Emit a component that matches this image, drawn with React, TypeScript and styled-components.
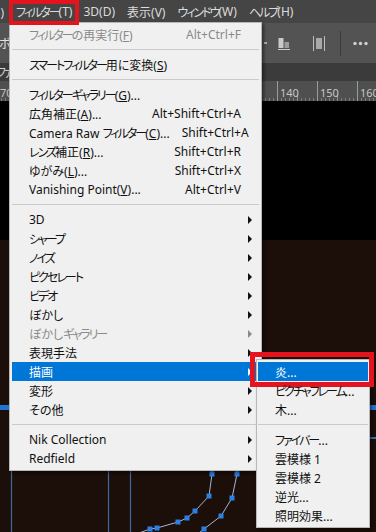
import React from "react";
import styled, { createGlobalStyle, css } from "styled-components";

const GlobalStyle = createGlobalStyle`
  html, body {
    margin: 0;
    padding: 0;
    background: #000;
  }
`;

const UI_FONT = `"Noto Sans", "Noto Sans CJK JP", sans-serif`;
const MARK_RED = "#e5131d";

const Screen = styled.div`
  position: relative;
  width: 376px;
  height: 532px;
  overflow: hidden;
  display: flex;
  flex-direction: column;
  font-family: ${UI_FONT};
  font-feature-settings: "palt";
`;

/* katakana in the Windows UI font are much narrower than in Noto CJK */
const Kana = styled.span`
  letter-spacing: -2px;
`;

/* ---------- application menu bar ---------- */

const MenuBar = styled.div`
  flex: none;
  height: 23px;
  display: flex;
  align-items: center;
  background: #454545;
  color: #dcdcdc;
  font-size: 12px;
`;

const BarLead = styled.div`
  flex: none;
  width: 10px;
  height: 100%;
  display: flex;
  justify-content: flex-end;
`;

const BarItem = styled.div<{ $marked?: boolean }>`
  position: relative;
  flex: none;
  height: 23px;
  display: flex;
  align-items: center;
  padding: 0 6px;
  white-space: nowrap;

  ${(p) =>
    p.$marked &&
    css`
      z-index: 20;
      padding-right: 5px;
      &::after {
        content: "";
        position: absolute;
        left: -1px;
        right: -2px;
        top: 0;
        bottom: -2px;
        border: 4px solid ${MARK_RED};
      }
    `}
`;

/* ---------- options bar ---------- */

const OptionsBar = styled.div`
  flex: none;
  height: 40px;
  display: flex;
  align-items: center;
  background: #535353;
  color: #e2e2e2;
  font-size: 12px;
`;

const OptionLabel = styled.span`
  margin-left: -1px;
  white-space: nowrap;
`;

const ToolGroup = styled.div`
  margin-left: auto;
  padding-right: 8px;
  display: flex;
  align-items: center;
`;

const ToolDash = styled.span`
  width: 3px;
  height: 2px;
  background: #b4b4b4;
`;

const ToolSlot = styled.span<{ $space: number }>`
  margin-left: ${(p) => p.$space}px;
  display: flex;
  align-items: center;
`;

const ToolDivider = styled.span`
  margin-left: 15px;
  width: 1px;
  height: 25px;
  background: #3c3c3c;
`;

/* ---------- document tab + ruler ---------- */

const TabBar = styled.div`
  flex: none;
  height: 18px;
  display: flex;
  align-items: center;
  background: #3b3b3b;
  color: #cfcfcf;
  font-size: 12px;
`;

const TabLabel = styled.span`
  margin-left: -4px;
  white-space: nowrap;
`;

const Ruler = styled.div`
  flex: none;
  height: 20px;
  display: flex;
  background: #4f4f4f;
  color: #c6c6c6;
  font-size: 11px;
`;

const RulerCell = styled.div`
  flex: none;
  width: 40px;
  height: 100%;
  box-sizing: border-box;
  border-left: 1px solid #9a9a9a;
  padding: 6px 0 0 2px;
  line-height: 1;
  background:
    linear-gradient(#8e8e8e, #8e8e8e) 19px 100% / 1px 7px no-repeat,
    repeating-linear-gradient(90deg, transparent 0 3px, #7e7e7e 3px 4px) 0 100% / 100% 3px no-repeat;

  &:first-child {
    margin-left: -3px;
  }
`;

/* ---------- canvas ---------- */

const CanvasBlack = styled.div`
  flex: none;
  height: 139px;
  background: #000;
`;

const CanvasArt = styled.div`
  flex: 1;
  background: #1c0e08;

  svg {
    display: block;
    width: 100%;
    height: 100%;
  }
`;

/* ---------- dropdown menus ---------- */

const panel = css`
  position: absolute;
  box-sizing: border-box;
  background: #f0f0f0;
  border: 1px solid #b8b8b8;
  box-shadow: 2px 2px 3px rgba(0, 0, 0, 0.45);
  font-size: 12px;
`;

const Dropdown = styled.div`
  ${panel};
  top: 22px;
  left: 9px;
  width: 253px;
  padding: 2px;
  z-index: 10;
`;

const Flyout = styled.div`
  ${panel};
  top: -3px;
  left: 244px;
  width: 114px;
  padding: 2px 1px;
  z-index: 12;
`;

const Row = styled.div<{ $active?: boolean; $disabled?: boolean; $marked?: boolean }>`
  position: relative;
  height: 19px;
  display: flex;
  align-items: center;
  padding: 0 18px 0 17px;
  white-space: nowrap;
  color: ${(p) => (p.$active ? "#ffffff" : p.$disabled ? "#8a8a8a" : "#111111")};
  background: ${(p) => (p.$active ? "#0076d6" : "transparent")};

  u {
    text-underline-offset: 1px;
  }

  ${(p) =>
    p.$marked &&
    css`
      &::after {
        content: "";
        position: absolute;
        left: -8px;
        right: -6px;
        top: -10px;
        bottom: -6px;
        border: 5px solid ${MARK_RED};
      }
    `}
`;

const Shortcut = styled.span`
  margin-left: auto;
  padding-left: 12px;
`;

const SubArrow = styled.span<{ $color: string }>`
  margin-left: auto;
  margin-right: -11px;
  width: 0;
  height: 0;
  border-left: 4px solid ${(p) => p.$color};
  border-top: 4px solid transparent;
  border-bottom: 4px solid transparent;
`;

const Separator = styled.div`
  height: 1px;
  margin: 5px 0;
  background: #cacaca;
`;

/* ---------- data ---------- */

type Entry =
  | { sep: true }
  | { label: string; keys?: string; sub?: boolean; off?: boolean; open?: boolean };

const FILTER_MENU: Entry[] = [
  { label: "フィルターの再実行(&F)", keys: "Alt+Ctrl+F", off: true },
  { sep: true },
  { label: "スマートフィルター用に変換(&S)" },
  { sep: true },
  { label: "フィルターギャラリー(&G)..." },
  { label: "広角補正(&A)...", keys: "Alt+Shift+Ctrl+A" },
  { label: "Camera Raw フィルター(&C)...", keys: "Shift+Ctrl+A" },
  { label: "レンズ補正(&R)...", keys: "Shift+Ctrl+R" },
  { label: "ゆがみ(&L)...", keys: "Shift+Ctrl+X" },
  { label: "Vanishing Point(&V)...", keys: "Alt+Ctrl+V" },
  { sep: true },
  { label: "3D", sub: true },
  { label: "シャープ", sub: true },
  { label: "ノイズ", sub: true },
  { label: "ピクセレート", sub: true },
  { label: "ビデオ", sub: true },
  { label: "ぼかし", sub: true },
  { label: "ぼかしギャラリー", sub: true, off: true },
  { label: "表現手法", sub: true },
  { label: "描画", sub: true, open: true },
  { label: "変形", sub: true },
  { label: "その他", sub: true },
  { sep: true },
  { label: "Nik Collection", sub: true },
  { label: "Redfield", sub: true },
];

const RENDER_MENU: Entry[] = [
  { label: "炎...", open: true },
  { label: "ピクチャフレーム..." },
  { label: "木..." },
  { sep: true },
  { label: "ファイバー..." },
  { label: "雲模様 1" },
  { label: "雲模様 2" },
  { label: "逆光..." },
  { label: "照明効果..." },
];

const BAR_ITEMS = ["3D(D)", "表示(V)", "ウィンドウ(W)", "ヘルプ(H)"];

/* labels under the dropdown are covered, so only the visible ones are printed */
const RULER_MARKS = [
  { at: 70, show: true },
  { at: 80 }, { at: 90 }, { at: 100 }, { at: 110 }, { at: 120 }, { at: 130 },
  { at: 140, show: true },
  { at: 150, show: true },
  { at: 160, show: true },
];

const KATAKANA_RUN = /([\u30a1-\u30ff]+)/;

const Jp = ({ text }: { text: string }) => (
  <>
    {text.split(KATAKANA_RUN).map((part, i) =>
      i % 2 === 1 ? <Kana key={i}>{part}</Kana> : part
    )}
  </>
);

const Label = ({ text }: { text: string }) => {
  const i = text.indexOf("&");
  if (i < 0) return <Jp text={text} />;
  return (
    <>
      <Jp text={text.slice(0, i)} />
      <u>{text[i + 1]}</u>
      {text.slice(i + 2)}
    </>
  );
};

/* ---------- icons ---------- */

const AlignBottomIcon = () => (
  <svg width="12" height="14" viewBox="0 0 12 14">
    <rect x="0.5" y="2" width="5" height="10" fill="#c9c9c9" />
    <rect x="6.5" y="6" width="4.5" height="6" fill="#9c9c9c" />
    <rect x="0" y="13" width="12" height="1" fill="#c9c9c9" />
  </svg>
);

const DistributeIcon = () => (
  <svg width="12" height="15" viewBox="0 0 12 15">
    <rect x="0" y="0" width="1" height="15" fill="#bdbdbd" />
    <rect x="3" y="2" width="6" height="11" fill="#a9a9a9" />
    <rect x="11" y="0" width="1" height="15" fill="#bdbdbd" />
  </svg>
);

const MoreIcon = () => (
  <svg width="15" height="5" viewBox="0 0 15 5">
    <circle cx="2" cy="2.5" r="1.7" fill="#cfcfcf" />
    <circle cx="7.5" cy="2.5" r="1.7" fill="#cfcfcf" />
    <circle cx="13" cy="2.5" r="1.7" fill="#cfcfcf" />
  </svg>
);

const PATH_A: [number, number][] = [
  [150, 529], [157, 528], [178, 522], [187, 518], [195, 511], [209, 496], [212, 474],
];
const PATH_B: [number, number][] = [
  [204, 529], [221, 516], [232, 498], [237, 474],
];

const ArtLayer = () => (
  <svg viewBox="0 240 376 292" preserveAspectRatio="none">
    <g stroke="#41679f" strokeWidth="1.2">
      <line x1="11.5" y1="240" x2="11.5" y2="532" />
      <line x1="108.5" y1="240" x2="108.5" y2="532" />
      <line x1="130.5" y1="240" x2="130.5" y2="532" />
    </g>
    <rect x="0" y="405" width="376" height="5" fill="#1f74d6" />
    <rect x="368" y="437" width="8" height="2" fill="#3a6fb8" />
    <polyline
      points={[[120, 540], ...PATH_A, [214, 440]].map((p) => p.join(",")).join(" ")}
      fill="none"
      stroke="#a7b7d2"
      strokeWidth="1"
    />
    <polyline
      points={[[190, 540], ...PATH_B, [240, 440]].map((p) => p.join(",")).join(" ")}
      fill="none"
      stroke="#a7b7d2"
      strokeWidth="1"
    />
    {[...PATH_A, ...PATH_B].map(([x, y], i) => (
      <rect key={i} x={x - 2.5} y={y - 2.5} width="5" height="5" fill="#2a80e6" />
    ))}
  </svg>
);

/* ---------- menu rendering ---------- */

const MenuRows = ({ items, flyout }: { items: Entry[]; flyout?: Entry[] }) => (
  <>
    {items.map((e, i) => {
      if ("sep" in e) return <Separator key={i} />;
      const arrowColor = e.open ? "#ffffff" : e.off ? "#8a8a8a" : "#111111";
      return (
        <Row key={i} $active={e.open} $disabled={e.off} $marked={e.open && !flyout}>
          <span>
            <Label text={e.label} />
          </span>
          {e.keys && <Shortcut>{e.keys}</Shortcut>}
          {e.sub && <SubArrow $color={arrowColor} />}
          {e.open && flyout && (
            <Flyout>
              <MenuRows items={flyout} />
            </Flyout>
          )}
        </Row>
      );
    })}
  </>
);

const App = () => (
  <>
    <GlobalStyle />
    <Screen>
      <MenuBar>
        <BarLead>
          <BarItem>
            <Jp text="選択範囲(S)" />
          </BarItem>
        </BarLead>
        <BarItem $marked>
          <Jp text="フィルター(T)" />
        </BarItem>
        {BAR_ITEMS.map((t) => (
          <BarItem key={t}>
            <Jp text={t} />
          </BarItem>
        ))}
      </MenuBar>

      <OptionsBar>
        <OptionLabel>
          <Jp text="ボックス" />
        </OptionLabel>
        <ToolGroup>
          <ToolDash />
          <ToolSlot $space={11}>
            <AlignBottomIcon />
          </ToolSlot>
          <ToolSlot $space={23}>
            <DistributeIcon />
          </ToolSlot>
          <ToolDivider />
          <ToolSlot $space={12}>
            <MoreIcon />
          </ToolSlot>
        </ToolGroup>
      </OptionsBar>

      <TabBar>
        <TabLabel>
          <Jp text="ファイル" />
        </TabLabel>
      </TabBar>

      <Ruler>
        {RULER_MARKS.map((m) => (
          <RulerCell key={m.at}>{m.show ? m.at : null}</RulerCell>
        ))}
      </Ruler>

      <CanvasBlack />
      <CanvasArt>
        <ArtLayer />
      </CanvasArt>

      <Dropdown>
        <MenuRows items={FILTER_MENU} flyout={RENDER_MENU} />
      </Dropdown>
    </Screen>
  </>
);

export default App;
